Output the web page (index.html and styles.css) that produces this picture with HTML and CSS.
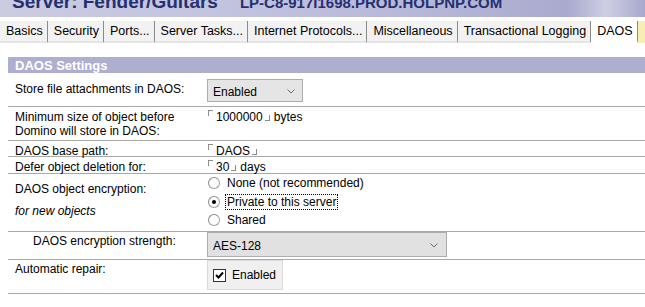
FILE: index.html
```html
<!DOCTYPE html>
<html lang="en">

<head>
    <meta charset="UTF-8">
    <title>Server: Fender/Guitars - DAOS</title>
    <link rel="stylesheet" href="styles.css">
</head>

<body>
    <div class="banner">
        <div class="banner-title">
            <span class="server">Server: Fender/Guitars</span><span class="host">LP-C8-917I1698.PROD.HOLPNP.COM</span>
        </div>
    </div>

    <div class="tabs">
        <span class="tab">Basics</span>
        <span class="tab">Security</span>
        <span class="tab">Ports...</span>
        <span class="tab">Server Tasks...</span>
        <span class="tab">Internet Protocols...</span>
        <span class="tab">Miscellaneous</span>
        <span class="tab">Transactional Logging</span>
        <span class="tab tab-active">DAOS</span>
        <span class="tab tab-next">Shared Mail</span>
    </div>

    <div class="form">
        <div class="section-head">DAOS Settings</div>

        <div class="row row-store">
            <div class="label">Store file attachments in DAOS:</div>
            <div class="value">
                <div class="combo combo-small">
                    <span>Enabled</span>
                    <svg class="chevron" width="8" height="5" viewBox="0 0 8 5"><polyline points="0.5,0.5 4,4 7.5,0.5" /></svg>
                </div>
            </div>
        </div>

        <div class="row row-size">
            <div class="label">Minimum size of object before<br>Domino will store in DAOS:</div>
            <div class="value"><span class="mark-open"></span>1000000<span class="mark-close"></span>bytes</div>
        </div>

        <div class="row row-path">
            <div class="label">DAOS base path:</div>
            <div class="value"><span class="mark-open"></span>DAOS<span class="mark-close"></span></div>
        </div>

        <div class="row row-defer">
            <div class="label">Defer object deletion for:</div>
            <div class="value"><span class="mark-open"></span>30<span class="mark-close"></span>days</div>
        </div>

        <div class="row row-crypt">
            <div class="label">
                DAOS object encryption:
                <div class="note">for new objects</div>
            </div>
            <div class="value">
                <div class="radio"><span class="radio-dot"></span>None (not recommended)</div>
                <div class="radio"><span class="radio-dot radio-on"></span><span class="focus">Private to this server</span></div>
                <div class="radio"><span class="radio-dot"></span>Shared</div>
            </div>
        </div>

        <div class="row row-strength">
            <div class="label">DAOS encryption strength:</div>
            <div class="value">
                <div class="combo combo-wide">
                    <span>AES-128</span>
                    <svg class="chevron" width="8" height="5" viewBox="0 0 8 5"><polyline points="0.5,0.5 4,4 7.5,0.5" /></svg>
                </div>
            </div>
        </div>

        <div class="row row-repair">
            <div class="label">Automatic repair:</div>
            <div class="value">
                <div class="check-button">
                    <span class="check-box">
                        <svg width="11" height="11" viewBox="0 0 11 11"><polyline points="2,5 4.5,7.5 9,2.5" /></svg>
                    </span>
                    Enabled
                </div>
            </div>
        </div>
    </div>
</body>

</html>
```

FILE: styles.css
```css
body {
    margin: 0;
    width: 645px;
    overflow: hidden;
    font-family: "Liberation Sans", Arial, sans-serif;
    font-size: 12px;
    color: #000;
    background-color: #fff;
}

/* top banner, only the lower half of the title shows */
.banner {
    height: 17px;
    overflow: hidden;
    background: linear-gradient(to right, #cbcce1 0%, #c2c3de 35%, #b7b8d8 65%, #a9aacd 88%, #cdcee4 94%, #a7a8cb 100%);
}

.banner-title {
    margin-top: -8px;
    padding-left: 12px;
    line-height: 19px;
    white-space: nowrap;
    color: #253070;
    font-weight: bold;
}

.server {
    font-size: 19px;
}

.host {
    font-size: 15px;
    margin-left: 22px;
}

/* tabs */
.tabs {
    display: flex;
    margin-top: 4px;
    height: 22px;
    overflow: hidden;
    white-space: nowrap;
    font-size: 12.5px;
}

.tab {
    flex-shrink: 0;
    padding: 0 4px 0 6px;
    line-height: 20px;
    background-color: #f2f2f2;
    border-right: 1px solid #8a8a8a;
    border-bottom: 2px solid #e4e4e4;
}

.tab-active {
    background-color: #fff;
    border-bottom-color: #fff;
}

.tab-next {
    background-color: #f6eeb4;
    color: #f6eeb4;
    border-right: none;
    border-bottom-color: #f6eeb4;
}

/* form */
.form {
    margin: 14px 0 0 8px;
}

.section-head {
    height: 14px;
    padding: 2px 0 0 7px;
    line-height: 14px;
    font-size: 13px;
    font-weight: bold;
    color: #fff;
    background-color: #aeaed1;
}

.row {
    display: grid;
    grid-template-columns: 199px 1fr;
    border-bottom: 1px solid #a9a9a9;
}

.label {
    padding-left: 7px;
    line-height: 14px;
}

.value {
    line-height: 14px;
}

.row-store {
    height: 33px;
}

.row-store .label {
    padding-top: 9px;
}

.row-size {
    height: 33px;
}

.row-path {
    height: 15px;
}

.row-defer {
    height: 16px;
}

.row-size .label,
.row-size .value,
.row-path .label,
.row-path .value,
.row-defer .label,
.row-defer .value {
    padding-top: 3px;
}

.row-crypt {
    height: 57px;
}

.row-crypt .label {
    padding-top: 8px;
}

.note {
    margin-top: 8px;
    font-style: italic;
}

.row-strength {
    height: 27px;
}

.row-strength .label {
    padding: 2px 0 0 25px;
}

.row-repair {
    height: 33px;
}

.row-repair .label {
    padding-top: 2px;
}

/* drop-down boxes */
.combo {
    display: flex;
    align-items: center;
    justify-content: space-between;
    box-sizing: border-box;
    border: 1px solid #adadad;
    background-color: #e5e5e5;
    padding: 2px 7px 0 5px;
}

.combo-small {
    width: 96px;
    height: 23px;
    margin-top: 6px;
}

.combo-wide {
    width: 240px;
    height: 25px;
    padding-right: 8px;
    background-color: #e1e1e1;
}

.chevron polyline {
    fill: none;
    stroke: #6b6b6b;
    stroke-width: 1;
}

/* notes field delimiters */
.mark-open {
    display: inline-block;
    width: 4px;
    height: 5px;
    margin: 0 3px 0 1px;
    vertical-align: top;
    border-top: 1px solid #8c8c8c;
    border-left: 1px solid #8c8c8c;
}

.mark-close {
    display: inline-block;
    width: 4px;
    height: 5px;
    margin: 0 4px 0 2px;
    border-right: 1px solid #8c8c8c;
    border-bottom: 1px solid #8c8c8c;
}

/* radio buttons */
.radio {
    display: flex;
    align-items: center;
    height: 18.5px;
}

.radio-dot {
    display: flex;
    align-items: center;
    justify-content: center;
    width: 10px;
    height: 10px;
    margin: 0 7px 0 1px;
    border: 1px solid #a2a2a2;
    border-top-color: #8a8a8a;
    border-left-color: #8a8a8a;
    border-radius: 50%;
    background-color: #fff;
}

.radio-on::after {
    content: "";
    width: 4px;
    height: 4px;
    border-radius: 50%;
    background-color: #000;
}

.focus {
    margin-left: -2px;
    padding: 0 1px;
    border: 1px dotted #000;
}

/* checkbox button */
.check-button {
    display: flex;
    align-items: center;
    box-sizing: border-box;
    width: 76px;
    height: 30px;
    padding-left: 5px;
    border: 1px solid #dadada;
    background-color: #f0f0f0;
}

.check-box {
    display: flex;
    width: 11px;
    height: 11px;
    margin-right: 6px;
    border: 1px solid #333;
    background-color: #fff;
}

.check-box polyline {
    fill: none;
    stroke: #000;
    stroke-width: 2;
}
```
